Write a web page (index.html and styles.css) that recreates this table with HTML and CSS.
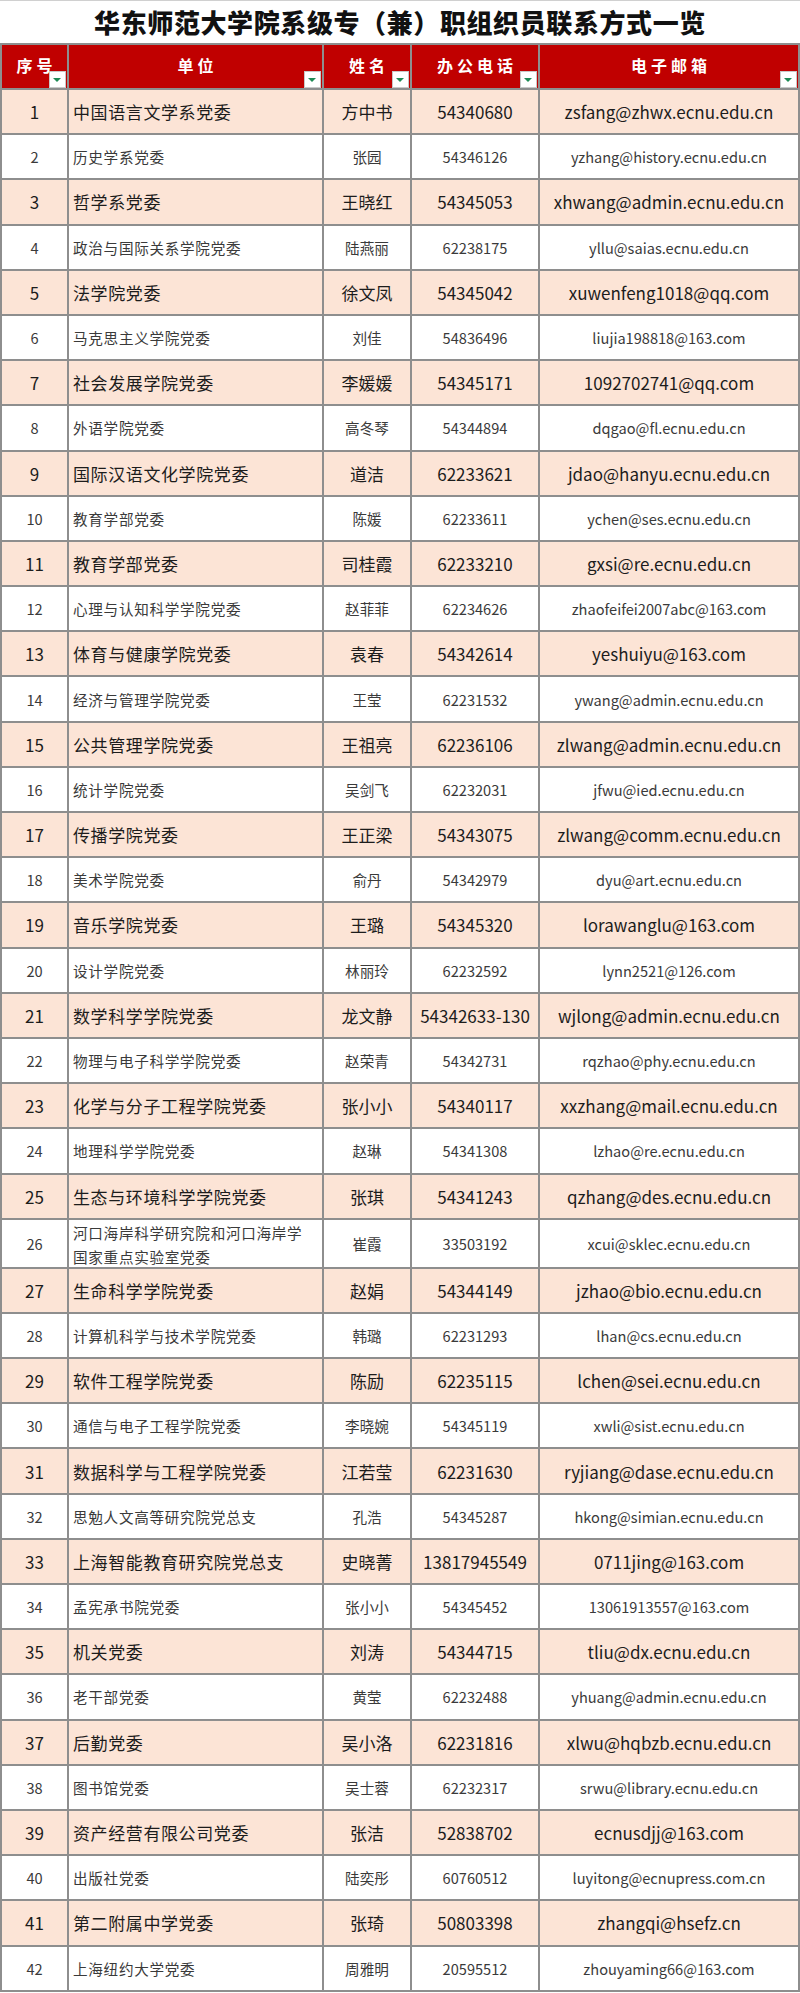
FILE: index.html
```html
<!DOCTYPE html>
<html lang="zh-CN">
<head>
<meta charset="utf-8">
<title>华东师范大学院系级专（兼）职组织员联系方式一览</title>
<link rel="stylesheet" href="styles.css">
</head>
<body>
<div class="title">华东师范大学院系级专（兼）职组织员联系方式一览</div>
<div class="sheet">
  <div class="row head">
    <div class="cell">序号<span class="filter"></span></div>
    <div class="cell">单位<span class="filter"></span></div>
    <div class="cell">姓名<span class="filter"></span></div>
    <div class="cell">办公电话<span class="filter"></span></div>
    <div class="cell">电子邮箱<span class="filter"></span></div>
  </div>
  <div class="row odd"><div class="cell">1</div><div class="cell unit">中国语言文学系党委</div><div class="cell">方中书</div><div class="cell">54340680</div><div class="cell">zsfang@zhwx.ecnu.edu.cn</div></div>
  <div class="row even"><div class="cell">2</div><div class="cell unit">历史学系党委</div><div class="cell">张园</div><div class="cell">54346126</div><div class="cell">yzhang@history.ecnu.edu.cn</div></div>
  <div class="row odd"><div class="cell">3</div><div class="cell unit">哲学系党委</div><div class="cell">王晓红</div><div class="cell">54345053</div><div class="cell">xhwang@admin.ecnu.edu.cn</div></div>
  <div class="row even"><div class="cell">4</div><div class="cell unit">政治与国际关系学院党委</div><div class="cell">陆燕丽</div><div class="cell">62238175</div><div class="cell">yllu@saias.ecnu.edu.cn</div></div>
  <div class="row odd"><div class="cell">5</div><div class="cell unit">法学院党委</div><div class="cell">徐文凤</div><div class="cell">54345042</div><div class="cell">xuwenfeng1018@qq.com</div></div>
  <div class="row even"><div class="cell">6</div><div class="cell unit">马克思主义学院党委</div><div class="cell">刘佳</div><div class="cell">54836496</div><div class="cell">liujia198818@163.com</div></div>
  <div class="row odd"><div class="cell">7</div><div class="cell unit">社会发展学院党委</div><div class="cell">李媛媛</div><div class="cell">54345171</div><div class="cell">1092702741@qq.com</div></div>
  <div class="row even"><div class="cell">8</div><div class="cell unit">外语学院党委</div><div class="cell">高冬琴</div><div class="cell">54344894</div><div class="cell">dqgao@fl.ecnu.edu.cn</div></div>
  <div class="row odd"><div class="cell">9</div><div class="cell unit">国际汉语文化学院党委</div><div class="cell">道洁</div><div class="cell">62233621</div><div class="cell">jdao@hanyu.ecnu.edu.cn</div></div>
  <div class="row even"><div class="cell">10</div><div class="cell unit">教育学部党委</div><div class="cell">陈媛</div><div class="cell">62233611</div><div class="cell">ychen@ses.ecnu.edu.cn</div></div>
  <div class="row odd"><div class="cell">11</div><div class="cell unit">教育学部党委</div><div class="cell">司桂霞</div><div class="cell">62233210</div><div class="cell">gxsi@re.ecnu.edu.cn</div></div>
  <div class="row even"><div class="cell">12</div><div class="cell unit">心理与认知科学学院党委</div><div class="cell">赵菲菲</div><div class="cell">62234626</div><div class="cell">zhaofeifei2007abc@163.com</div></div>
  <div class="row odd"><div class="cell">13</div><div class="cell unit">体育与健康学院党委</div><div class="cell">袁春</div><div class="cell">54342614</div><div class="cell">yeshuiyu@163.com</div></div>
  <div class="row even"><div class="cell">14</div><div class="cell unit">经济与管理学院党委</div><div class="cell">王莹</div><div class="cell">62231532</div><div class="cell">ywang@admin.ecnu.edu.cn</div></div>
  <div class="row odd"><div class="cell">15</div><div class="cell unit">公共管理学院党委</div><div class="cell">王祖亮</div><div class="cell">62236106</div><div class="cell">zlwang@admin.ecnu.edu.cn</div></div>
  <div class="row even"><div class="cell">16</div><div class="cell unit">统计学院党委</div><div class="cell">吴剑飞</div><div class="cell">62232031</div><div class="cell">jfwu@ied.ecnu.edu.cn</div></div>
  <div class="row odd"><div class="cell">17</div><div class="cell unit">传播学院党委</div><div class="cell">王正梁</div><div class="cell">54343075</div><div class="cell">zlwang@comm.ecnu.edu.cn</div></div>
  <div class="row even"><div class="cell">18</div><div class="cell unit">美术学院党委</div><div class="cell">俞丹</div><div class="cell">54342979</div><div class="cell">dyu@art.ecnu.edu.cn</div></div>
  <div class="row odd"><div class="cell">19</div><div class="cell unit">音乐学院党委</div><div class="cell">王璐</div><div class="cell">54345320</div><div class="cell">lorawanglu@163.com</div></div>
  <div class="row even"><div class="cell">20</div><div class="cell unit">设计学院党委</div><div class="cell">林丽玲</div><div class="cell">62232592</div><div class="cell">lynn2521@126.com</div></div>
  <div class="row odd"><div class="cell">21</div><div class="cell unit">数学科学学院党委</div><div class="cell">龙文静</div><div class="cell">54342633-130</div><div class="cell">wjlong@admin.ecnu.edu.cn</div></div>
  <div class="row even"><div class="cell">22</div><div class="cell unit">物理与电子科学学院党委</div><div class="cell">赵荣青</div><div class="cell">54342731</div><div class="cell">rqzhao@phy.ecnu.edu.cn</div></div>
  <div class="row odd"><div class="cell">23</div><div class="cell unit">化学与分子工程学院党委</div><div class="cell">张小小</div><div class="cell">54340117</div><div class="cell">xxzhang@mail.ecnu.edu.cn</div></div>
  <div class="row even"><div class="cell">24</div><div class="cell unit">地理科学学院党委</div><div class="cell">赵琳</div><div class="cell">54341308</div><div class="cell">lzhao@re.ecnu.edu.cn</div></div>
  <div class="row odd"><div class="cell">25</div><div class="cell unit">生态与环境科学学院党委</div><div class="cell">张琪</div><div class="cell">54341243</div><div class="cell">qzhang@des.ecnu.edu.cn</div></div>
  <div class="row even tall"><div class="cell">26</div><div class="cell unit wrap">河口海岸科学研究院和河口海岸学国家重点实验室党委</div><div class="cell">崔霞</div><div class="cell">33503192</div><div class="cell">xcui@sklec.ecnu.edu.cn</div></div>
  <div class="row odd"><div class="cell">27</div><div class="cell unit">生命科学学院党委</div><div class="cell">赵娟</div><div class="cell">54344149</div><div class="cell">jzhao@bio.ecnu.edu.cn</div></div>
  <div class="row even"><div class="cell">28</div><div class="cell unit">计算机科学与技术学院党委</div><div class="cell">韩璐</div><div class="cell">62231293</div><div class="cell">lhan@cs.ecnu.edu.cn</div></div>
  <div class="row odd"><div class="cell">29</div><div class="cell unit">软件工程学院党委</div><div class="cell">陈励</div><div class="cell">62235115</div><div class="cell">lchen@sei.ecnu.edu.cn</div></div>
  <div class="row even"><div class="cell">30</div><div class="cell unit">通信与电子工程学院党委</div><div class="cell">李晓婉</div><div class="cell">54345119</div><div class="cell">xwli@sist.ecnu.edu.cn</div></div>
  <div class="row odd"><div class="cell">31</div><div class="cell unit">数据科学与工程学院党委</div><div class="cell">江若莹</div><div class="cell">62231630</div><div class="cell">ryjiang@dase.ecnu.edu.cn</div></div>
  <div class="row even"><div class="cell">32</div><div class="cell unit">思勉人文高等研究院党总支</div><div class="cell">孔浩</div><div class="cell">54345287</div><div class="cell">hkong@simian.ecnu.edu.cn</div></div>
  <div class="row odd"><div class="cell">33</div><div class="cell unit">上海智能教育研究院党总支</div><div class="cell">史晓菁</div><div class="cell">13817945549</div><div class="cell">0711jing@163.com</div></div>
  <div class="row even"><div class="cell">34</div><div class="cell unit">孟宪承书院党委</div><div class="cell">张小小</div><div class="cell">54345452</div><div class="cell">13061913557@163.com</div></div>
  <div class="row odd"><div class="cell">35</div><div class="cell unit">机关党委</div><div class="cell">刘涛</div><div class="cell">54344715</div><div class="cell">tliu@dx.ecnu.edu.cn</div></div>
  <div class="row even"><div class="cell">36</div><div class="cell unit">老干部党委</div><div class="cell">黄莹</div><div class="cell">62232488</div><div class="cell">yhuang@admin.ecnu.edu.cn</div></div>
  <div class="row odd"><div class="cell">37</div><div class="cell unit">后勤党委</div><div class="cell">吴小洛</div><div class="cell">62231816</div><div class="cell">xlwu@hqbzb.ecnu.edu.cn</div></div>
  <div class="row even"><div class="cell">38</div><div class="cell unit">图书馆党委</div><div class="cell">吴士蓉</div><div class="cell">62232317</div><div class="cell">srwu@library.ecnu.edu.cn</div></div>
  <div class="row odd"><div class="cell">39</div><div class="cell unit">资产经营有限公司党委</div><div class="cell">张洁</div><div class="cell">52838702</div><div class="cell">ecnusdjj@163.com</div></div>
  <div class="row even"><div class="cell">40</div><div class="cell unit">出版社党委</div><div class="cell">陆奕彤</div><div class="cell">60760512</div><div class="cell">luyitong@ecnupress.com.cn</div></div>
  <div class="row odd"><div class="cell">41</div><div class="cell unit">第二附属中学党委</div><div class="cell">张琦</div><div class="cell">50803398</div><div class="cell">zhangqi@hsefz.cn</div></div>
  <div class="row even"><div class="cell">42</div><div class="cell unit">上海纽约大学党委</div><div class="cell">周雅明</div><div class="cell">20595512</div><div class="cell">zhouyaming66@163.com</div></div>
</div>
</body>
</html>
```

FILE: styles.css
```css
html, body {
  margin: 0;
  padding: 0;
  background: #ffffff;
}
body {
  font-family: "Noto Sans CJK SC", "Noto Sans", sans-serif;
  width: 800px;
}
.title {
  height: 43px;
  box-sizing: border-box;
  border-top: 1px solid #d0d0d0;
  display: flex;
  align-items: center;
  justify-content: center;
  font-size: 26px;
  font-weight: 900;
  letter-spacing: 0.6px;
  color: #111111;
  line-height: 1;
}
.sheet {
  background: #8e8e8e;
  padding: 2px;
  display: flex;
  flex-direction: column;
  gap: 2px;
}
.row {
  display: grid;
  grid-template-columns: 65px 253px 86px 126px 258px;
  gap: 2px;
  height: 43.2px;
}
.row.head {
  height: 43px;
}
.row.tall {
  height: 47px;
}
.cell {
  display: flex;
  align-items: center;
  justify-content: center;
  white-space: nowrap;
  overflow: hidden;
  position: relative;
}
.cell.unit {
  justify-content: flex-start;
  padding-left: 4px;
}
.head .cell {
  background: #c00000;
  color: #ffffff;
  font-weight: 700;
  font-size: 16px;
  letter-spacing: 4px;
  padding-left: 4px;
  padding-bottom: 4px;
  box-sizing: border-box;
}
.filter {
  position: absolute;
  right: 1px;
  bottom: 0;
  width: 17px;
  height: 17px;
  box-sizing: border-box;
  background: #ffffff;
  border: 1px solid #c8c8c8;
}
.filter::after {
  content: "";
  position: absolute;
  right: 4px;
  bottom: 5px;
  border-left: 4px solid transparent;
  border-right: 4px solid transparent;
  border-top: 4px solid #1e8a55;
}
.odd .cell {
  background: #fce4d6;
  color: #1c1c1c;
  font-size: 17px;
}
.odd .cell.unit {
  letter-spacing: 0.6px;
}
.even .cell {
  background: #ffffff;
  color: #3a3a3a;
  font-size: 14.6px;
}
.even .cell.unit {
  letter-spacing: 0.7px;
}
.cell.wrap {
  white-space: normal;
  line-height: 24px;
  padding-right: 16px;
  padding-top: 4px;
  box-sizing: border-box;
}
```
